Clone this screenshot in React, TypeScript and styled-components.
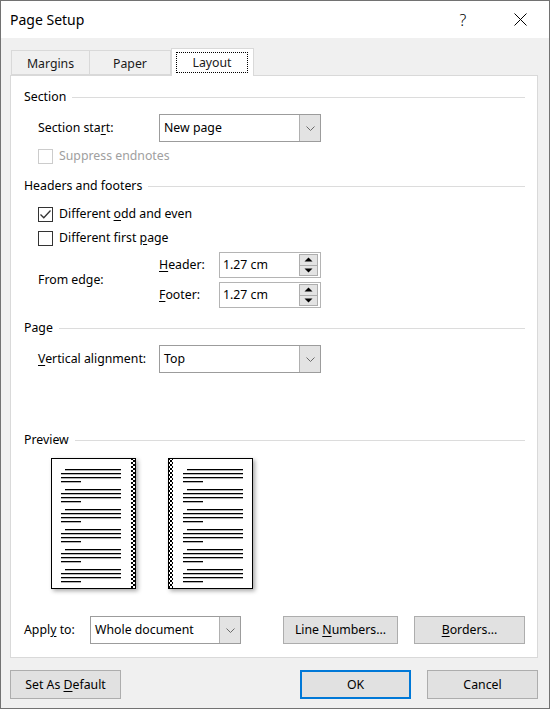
import styled, { createGlobalStyle } from "styled-components"

const GlobalStyle = createGlobalStyle`
  html, body {
    margin: 0;
    padding: 0;
    background: #ffffff;
  }
  body {
    font-family: "Noto Sans", "Segoe UI", sans-serif;
    font-size: 12.3px;
    line-height: 16px;
    color: #000;
  }
  * {
    box-sizing: border-box;
  }
`;

const Window = styled.div`
  width: 550px;
  height: 709px;
  border: 1px solid #727272;
  background: #f0f0f0;
  display: flex;
  flex-direction: column;
`;

const TitleBar = styled.div`
  height: 37px;
  background: #fff;
  display: flex;
  align-items: center;
  padding: 0 14px 0 9px;
`;

const Title = styled.div`
  flex: 1;
  font-size: 14px;
`;

const TitleButton = styled.div`
  width: 30px;
  height: 30px;
  display: flex;
  align-items: center;
  justify-content: center;
  font-size: 16px;
  font-weight: 300;
  & + & {
    margin-left: 27px;
  }
`;

const Body = styled.div`
  flex: 1;
  padding: 0 11px 0 9px;
  display: flex;
  flex-direction: column;
`;

const TabRow = styled.div`
  margin-top: 9px;
  height: 28px;
  padding-left: 1px;
  display: flex;
  align-items: flex-end;
  position: relative;
  z-index: 1;
`;

const Tab = styled.div<{ $active?: boolean; $w: number }>`
  width: ${p => p.$w}px;
  height: ${p => (p.$active ? 28 : 25)}px;
  margin-bottom: ${p => (p.$active ? -1 : 0)}px;
  background: ${p => (p.$active ? "#fff" : "#f0f0f0")};
  border: 1px solid #d9d9d9;
  border-bottom: ${p => (p.$active ? "none" : "1px solid #d9d9d9")};
  border-left-width: ${p => (p.$active ? 1 : 0)}px;
  &:first-child {
    border-left-width: 1px;
  }
  padding: ${p => (p.$active ? "3px 5px 3px 4px" : "2px 0 0")};
  display: flex;
  align-items: center;
  justify-content: center;
  color: #1a1a1a;
`;

const FocusLabel = styled.div`
  flex: 1;
  align-self: stretch;
  border: 1px dotted #000;
  display: flex;
  align-items: center;
  justify-content: center;
`;

const Panel = styled.div`
  height: 583px;
  background: #fff;
  border: 1px solid #d9d9d9;
  padding: 13px 12px 0 13px;
  display: flex;
  flex-direction: column;
`;

const GroupTitle = styled.div<{ $top: number }>`
  margin-top: ${p => p.$top}px;
  height: 16px;
  display: flex;
  align-items: center;
  gap: 6px;
  &::after {
    content: "";
    flex: 1;
    height: 1px;
    background: #dcdcdc;
  }
`;

const Row = styled.div<{ $top: number; $indent?: number }>`
  margin-top: ${p => p.$top}px;
  margin-left: ${p => p.$indent ?? 14}px;
  display: flex;
  align-items: center;
  height: 16px;
`;

const ComboRow = styled(Row)`
  height: 28px;
`;

const Label = styled.div<{ $w?: number; $disabled?: boolean }>`
  width: ${p => (p.$w ? `${p.$w}px` : "auto")};
  color: ${p => (p.$disabled ? "#a0a0a0" : "#000")};
  white-space: nowrap;
`;

const U = styled.span`
  text-decoration: underline;
  text-underline-offset: 2px;
`;

const Combo = styled.div<{ $w: number }>`
  width: ${p => p.$w}px;
  height: 28px;
  border: 1px solid #9c9c9c;
  background: #fff;
  display: flex;
  align-items: stretch;
`;

const ComboText = styled.div`
  flex: 1;
  padding-left: 4px;
  display: flex;
  align-items: center;
`;

const ComboArrow = styled.div`
  width: 21px;
  background: #e3e3e3;
  border-left: 1px solid #b0b0b0;
  display: flex;
  align-items: center;
  justify-content: center;
`;

const CheckBox = styled.div<{ $disabled?: boolean }>`
  width: 15px;
  height: 15px;
  border: 1px solid ${p => (p.$disabled ? "#cccccc" : "#333333")};
  background: #fff;
  margin-right: 6px;
  display: flex;
  align-items: center;
  justify-content: center;
`;

const EdgeGrid = styled.div`
  margin-top: 6px;
  margin-left: 14px;
  display: grid;
  grid-template-columns: 121px 60px 102px;
  grid-template-rows: 26px 26px;
  row-gap: 4px;
  align-items: center;
`;

const EdgeLabel = styled.div`
  grid-row: 1 / span 2;
  grid-column: 1;
`;

const SpinBox = styled.div`
  height: 26px;
  border: 1px solid #b4b4b4;
  display: flex;
  align-items: stretch;
  padding: 1px;
`;

const SpinText = styled.div`
  flex: 1;
  padding-left: 2px;
  display: flex;
  align-items: center;
`;

const SpinButtons = styled.div`
  width: 19px;
  margin-right: 1px;
  display: flex;
  flex-direction: column;
`;

const SpinButton = styled.div`
  flex: 1;
  background: #e3e3e3;
  border: 1px solid #adadad;
  display: flex;
  align-items: center;
  justify-content: center;
  & + & {
    border-top: none;
  }
`;

const PreviewRow = styled.div`
  margin-top: 10px;
  margin-left: 27px;
  display: flex;
  gap: 32px;
`;

const PageSvg = styled.svg`
  filter: drop-shadow(2px 2px 2px rgba(0, 0, 0, 0.35));
`;

const ApplyRow = styled.div`
  margin-top: 27px;
  height: 28px;
  display: flex;
  align-items: center;
`;

const Button = styled.div<{ $w: number; $default?: boolean; $h?: number }>`
  width: ${p => p.$w}px;
  height: ${p => p.$h ?? 28}px;
  background: #e1e1e1;
  border: ${p => (p.$default ? "2px solid #0078d7" : "1px solid #adadad")};
  display: flex;
  align-items: center;
  justify-content: center;
  white-space: nowrap;
`;

const ButtonBar = styled.div`
  margin-top: 12px;
  display: flex;
  align-items: center;
`;

const Spacer = styled.div`
  flex: 1;
`;

const Gap = styled.div`
  width: 16px;
`;

function Chevron() {
  return (
    <svg width="9" height="5" viewBox="0 0 9 5">
      <path d="M0.5 0.5 L4.5 4.5 L8.5 0.5" fill="none" stroke="#6a6a6a" strokeWidth="1" />
    </svg>
  );
}

function Tick() {
  return (
    <svg width="13" height="13" viewBox="0 0 13 13">
      <path d="M1.5 6.5 L4.8 9.8 L11.5 2.5" fill="none" stroke="#333" strokeWidth="1.3" />
    </svg>
  );
}

function Triangle({ up }: { up?: boolean }) {
  return (
    <svg width="9" height="5" viewBox="0 0 9 5">
      <path d={up ? "M0.5 4.5 L4.5 0.5 L8.5 4.5 Z" : "M0.5 0.5 L4.5 4.5 L8.5 0.5 Z"} fill="#000" />
    </svg>
  );
}

function Spinner({ value }: { value: string }) {
  return (
    <SpinBox>
      <SpinText>{value}</SpinText>
      <SpinButtons>
        <SpinButton><Triangle up /></SpinButton>
        <SpinButton><Triangle /></SpinButton>
      </SpinButtons>
    </SpinBox>
  );
}

function PreviewPage({ gutter }: { gutter: "left" | "right" }) {
  const x0 = gutter === "right" ? 10 : 15;
  const id = `chk-${gutter}`;
  const groups = [0, 1, 2, 3, 4, 5];
  return (
    <PageSvg width="85" height="131" viewBox="0 0 85 131">
      <defs>
        <pattern id={id} width="4" height="4" patternUnits="userSpaceOnUse">
          <rect width="4" height="4" fill="#fff" />
          <rect width="2" height="2" fill="#000" />
          <rect x="2" y="2" width="2" height="2" fill="#000" />
        </pattern>
      </defs>
      <rect x="0.5" y="0.5" width="84" height="130" fill="#fff" stroke="#000" />
      <rect x={gutter === "right" ? 80 : 1} y="1" width="4" height="129" fill={`url(#${id})`} />
      {groups.map(g => {
        const y = 11 + g * 20;
        return (
          <g key={g} fill="#000">
            <rect x={x0 + 4} y={y} width="56" height="1.3" />
            <rect x={x0} y={y + 4} width="60" height="1.3" />
            <rect x={x0} y={y + 8} width="60" height="1.3" />
            <rect x={x0} y={y + 12} width="20" height="1.3" />
          </g>
        );
      })}
    </PageSvg>
  );
}

export default function App() {
  return (
    <>
      <GlobalStyle />
      <Window>
        <TitleBar>
          <Title>Page Setup</Title>
          <TitleButton>?</TitleButton>
          <TitleButton>
            <svg width="13" height="13" viewBox="0 0 13 13">
              <path d="M0.5 0.5 L12.5 12.5 M12.5 0.5 L0.5 12.5" stroke="#000" strokeWidth="1" />
            </svg>
          </TitleButton>
        </TitleBar>
        <Body>
          <TabRow>
            <Tab $w={79}>Margins</Tab>
            <Tab $w={81}>Paper</Tab>
            <Tab $w={83} $active>
              <FocusLabel>Layout</FocusLabel>
            </Tab>
          </TabRow>
          <Panel>
            <GroupTitle $top={0}>Section</GroupTitle>
            <ComboRow $top={9}>
              <Label $w={121}>Section sta<U>r</U>t:</Label>
              <Combo $w={162}>
                <ComboText>New page</ComboText>
                <ComboArrow><Chevron /></ComboArrow>
              </Combo>
            </ComboRow>
            <Row $top={6}>
              <CheckBox $disabled />
              <Label $disabled>Suppress endnotes</Label>
            </Row>

            <GroupTitle $top={14}>Headers and footers</GroupTitle>
            <Row $top={12}>
              <CheckBox><Tick /></CheckBox>
              <Label>Different <U>o</U>dd and even</Label>
            </Row>
            <Row $top={8}>
              <CheckBox />
              <Label>Different first <U>p</U>age</Label>
            </Row>
            <EdgeGrid>
              <EdgeLabel>From edge:</EdgeLabel>
              <Label><U>H</U>eader:</Label>
              <Spinner value="1.27 cm" />
              <Label><U>F</U>ooter:</Label>
              <Spinner value="1.27 cm" />
            </EdgeGrid>

            <GroupTitle $top={12}>Page</GroupTitle>
            <ComboRow $top={9}>
              <Label $w={121}><U>V</U>ertical alignment:</Label>
              <Combo $w={162}>
                <ComboText>Top</ComboText>
                <ComboArrow><Chevron /></ComboArrow>
              </Combo>
            </ComboRow>

            <GroupTitle $top={59}>Preview</GroupTitle>
            <PreviewRow>
              <PreviewPage gutter="right" />
              <PreviewPage gutter="left" />
            </PreviewRow>

            <ApplyRow>
              <Label $w={66}><span>Appl<U>y</U> to:</span></Label>
              <Combo $w={151}>
                <ComboText>Whole document</ComboText>
                <ComboArrow><Chevron /></ComboArrow>
              </Combo>
              <Spacer />
              <Button $w={115}><span>Line <U>N</U>umbers...</span></Button>
              <Gap />
              <Button $w={111}><span><U>B</U>orders...</span></Button>
            </ApplyRow>
          </Panel>
          <ButtonBar>
            <Button $w={111} $h={29}><span>Set As <U>D</U>efault</span></Button>
            <Spacer />
            <Button $w={111} $h={29} $default><span>OK</span></Button>
            <Gap />
            <Button $w={111} $h={29}><span>Cancel</span></Button>
          </ButtonBar>
        </Body>
      </Window>
    </>
  );
}
